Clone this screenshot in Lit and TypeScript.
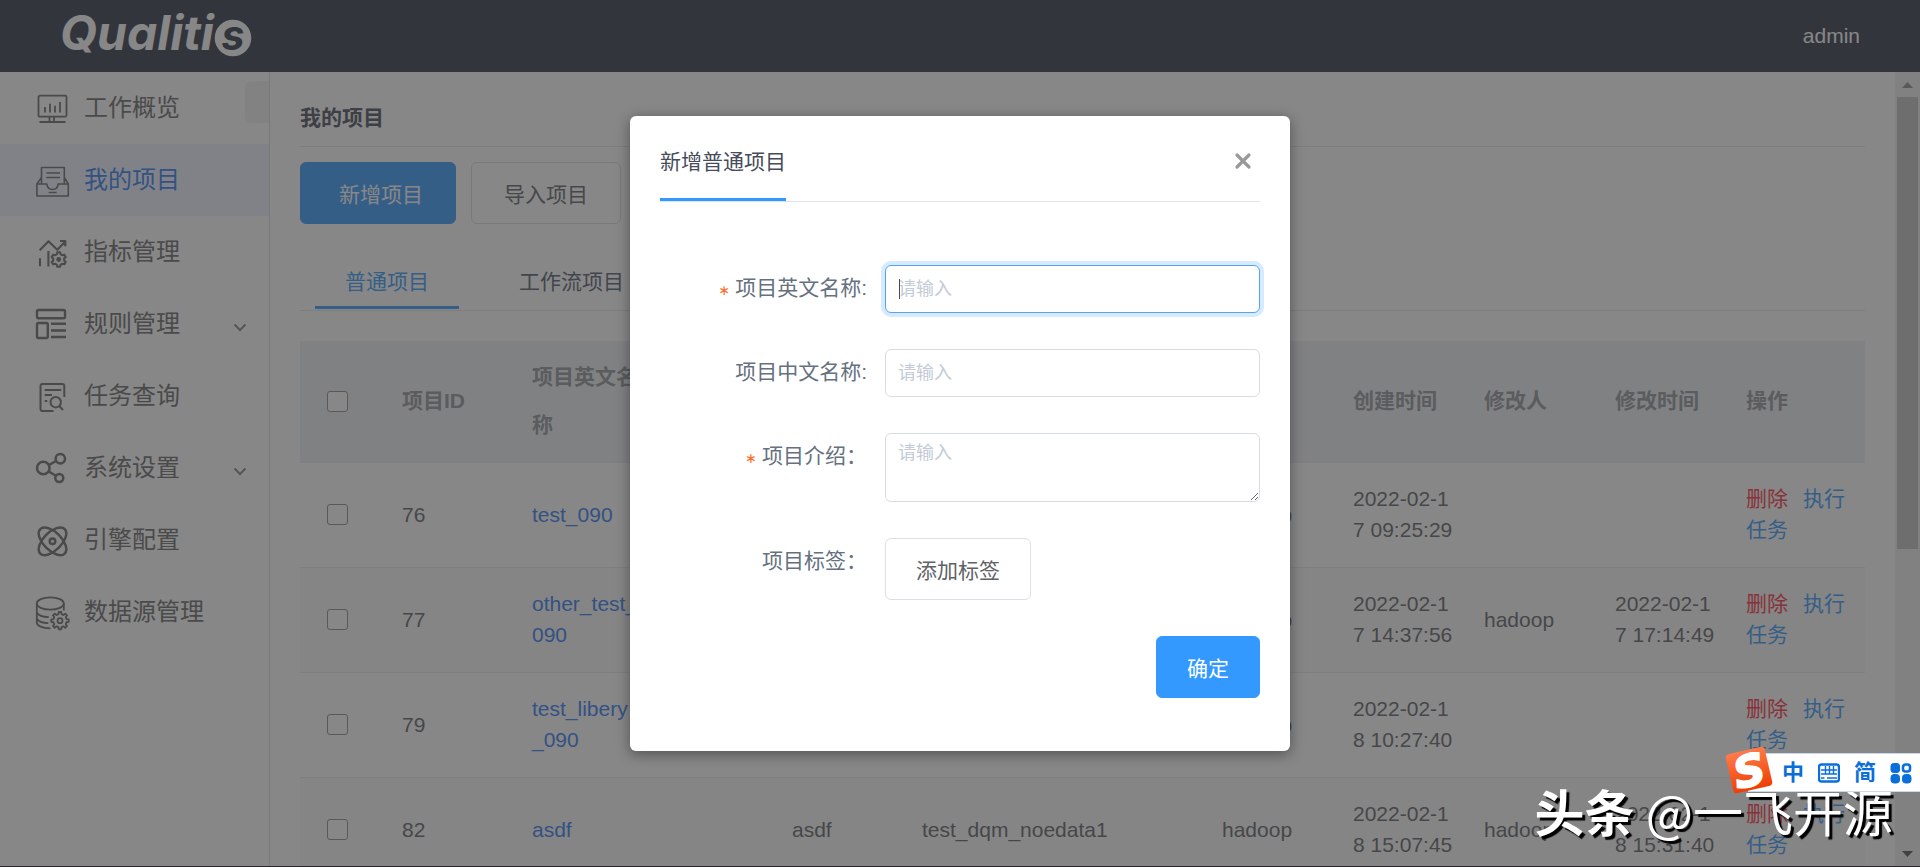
import { LitElement, html, css, svg, nothing } from "lit";
import { customElement, state } from "lit/decorators.js";
import { classMap } from "lit/directives/class-map.js";

const gear = (cx: number, cy: number, r: number, teeth: number) => {
  const points: string[] = [];
  const step = (Math.PI * 2) / teeth;
  for (let i = 0; i < teeth; i++) {
    const a = i * step - Math.PI / 2;
    [
      [-0.3, 0.76],
      [-0.18, 1],
      [0.18, 1],
      [0.3, 0.76],
    ].forEach(([offset, scale]) => {
      const t = a + offset * step;
      points.push(`${(cx + Math.cos(t) * r * scale).toFixed(2)},${(cy + Math.sin(t) * r * scale).toFixed(2)}`);
    });
  }
  return svg`<polygon points=${points.join(" ")}></polygon>`;
};

const icons: Record<string, unknown> = {
  overview: svg`<g stroke-width="1.8">
    <rect x="2.5" y="4.7" width="28" height="21" rx="1.5"></rect>
    <path d="M9 16v5.5M14 12.7v8.8M19 14.7v6.8M24 11v10.5M13.5 26v5M18 26v5M3.5 31h26"></path></g>`,
  projects: svg`<g stroke-width="1.6">
    <path d="M5.5 20.500V4.500h22.800v16M10.300 10H24M10.300 14.500H24M5.500 14.500L.9 21v12h31.400V21l-4-6.500"></path>
    <path d="M.9 21h10c.3 3.500 2.500 5.500 5.600 5.500s5.300-2 5.600-5.500h10.200M12.700 29.500h8"></path></g>`,
  metrics: svg`<g stroke-width="2.100">
    <path d="M3.700 15.300l8.800-9 8.800 8.500 7.800-8M24 6h5.300v5.200M4 23.300v8M12.400 16v15.400"></path>
    ${gear(22.7, 24.5, 7.4, 6)}<circle cx="22.700" cy="24.500" r="1.400" fill="currentColor"></circle></g>`,
  rules: svg`<g stroke-width="2.400">
    <rect x="1" y="3" width="28" height="8.300" rx="1.500"></rect>
    <rect x="1" y="16" width="10.800" height="15" rx="1.500"></rect>
    <path d="M15 16.700h15M15 23.500h15M15 30h15"></path></g>`,
  tasks: svg`<g stroke-width="2">
    <path d="M28.300 18V7a2 2 0 0 0-2-2H6.500a2 2 0 0 0-2 2v23a2 2 0 0 0 2 2H17.500M8.700 11h16.500M8.700 16H16M8.700 22h2.600"></path>
    <circle cx="19.700" cy="23.200" r="5.200"></circle><path d="M23.300 27l3.700 4"></path></g>`,
  settings: svg`<g stroke-width="2.500">
    <circle cx="7.300" cy="17" r="6.300"></circle><circle cx="24.300" cy="7.700" r="4.700"></circle>
    <circle cx="23.300" cy="27" r="4"></circle><path d="M13 14l7-4M12.700 20.500l7.200 4.300"></path></g>`,
  engine: svg`<g stroke-width="2.500">
    <ellipse cx="16.500" cy="18.300" rx="17.300" ry="9" transform="rotate(45 16.500 18.300)"></ellipse>
    <ellipse cx="16.500" cy="18.300" rx="17.300" ry="9" transform="rotate(-45 16.500 18.300)"></ellipse>
    <circle cx="16.500" cy="18.300" r="2.800"></circle></g>`,
  source: svg`<g stroke-width="1.800">
    <ellipse cx="14.300" cy="8.500" rx="13.500" ry="6.200"></ellipse>
    <path d="M.8 8.500v19c0 3.400 5.500 5.800 13.700 5.800M27.800 8.500v7M.8 17.500c1.500 3 6 4.500 12 4.700M.8 23.500c1.500 3 6 4.500 11.500 4.700"></path>
    ${gear(24, 25.7, 8.8, 8)}<circle cx="24" cy="25.700" r="2.500"></circle></g>`,
};

interface MenuItem {
  icon: string;
  label: string;
  active?: boolean;
  expandable?: boolean;
}

const MENU: MenuItem[] = [
  { icon: "overview", label: "工作概览" },
  { icon: "projects", label: "我的项目", active: true },
  { icon: "metrics", label: "指标管理" },
  { icon: "rules", label: "规则管理", expandable: true },
  { icon: "tasks", label: "任务查询" },
  { icon: "settings", label: "系统设置", expandable: true },
  { icon: "engine", label: "引擎配置" },
  { icon: "source", label: "数据源管理" },
];

const COLUMNS = [
  { key: "id", title: "项目ID" },
  { key: "name", title: "项目英文名称" },
  { key: "cn", title: "中文名称" },
  { key: "intro", title: "项目介绍" },
  { key: "tags", title: "项目标签" },
  { key: "creator", title: "创建人" },
  { key: "created", title: "创建时间" },
  { key: "editor", title: "修改人" },
  { key: "edited", title: "修改时间" },
];

const ROWS = [
  { id: "76", name: "test_090", creator: "hadoop", created: "2022-02-17 09:25:29" },
  {
    id: "77",
    name: "other_test_090",
    creator: "hadoop",
    created: "2022-02-17 14:37:56",
    editor: "hadoop",
    edited: "2022-02-17 17:14:49",
  },
  { id: "79", name: "test_libery_090", creator: "hadoop", created: "2022-02-18 10:27:40" },
  {
    id: "82",
    name: "asdf",
    intro: "asdf",
    tags: "test_dqm_noedata1",
    creator: "hadoop",
    created: "2022-02-18 15:07:45",
    editor: "hadoop",
    edited: "2022-02-18 15:31:40",
  },
] as Record<string, string>[];

const base = css`
  * {
    box-sizing: border-box;
  }
  a {
    text-decoration: none;
    color: inherit;
  }
  button,
  input,
  textarea {
    font: inherit;
    margin: 0;
  }
`;

@customElement("side-menu")
class SideMenu extends LitElement {
  static styles = [
    base,
    css`
      :host {
        display: block;
        position: relative;
        width: 270px;
        flex: none;
        overflow: hidden;
        background: #fff;
        border-right: 1px solid #d7dde4;
      }
      .item {
        display: flex;
        align-items: center;
        height: 72px;
        padding: 0 22px 0 36px;
        font-size: 24px;
        color: #666;
      }
      .active {
        background: #f0f3ff;
      }
      .active .label {
        color: #2d7af5;
      }
      .icon {
        width: 34px;
        height: 34px;
        margin-right: 14px;
        overflow: visible;
        fill: none;
        stroke: currentColor;
        stroke-linejoin: round;
      }
      .label {
        flex: 1;
        line-height: 36px;
      }
      .chevron {
        width: 14px;
        height: 14px;
        margin-top: 6px;
        fill: none;
        stroke: #808695;
        stroke-width: 2;
      }
      .fold {
        position: absolute;
        top: 9px;
        right: -18px;
        width: 42px;
        height: 42px;
        border: 0;
        border-radius: 6px;
        background: #f3f3f3;
      }
    `,
  ];

  render() {
    return html`<nav>
        ${MENU.map(
          (m) => html`<a href="#" class=${classMap({ item: true, active: !!m.active })}>
            <svg class="icon" viewBox="0 0 34 34">${icons[m.icon]}</svg>
            <span class="label">${m.label}</span>
            ${m.expandable
              ? html`<svg class="chevron" viewBox="0 0 14 14"><path d="M1.500 4.500L7 10l5.500-5.500"></path></svg>`
              : nothing}
          </a>`
        )}
      </nav>
      <button class="fold" aria-label="收起菜单"></button>`;
  }
}

@customElement("project-list")
class ProjectList extends LitElement {
  static styles = [
    base,
    css`
      :host {
        display: block;
        flex: 1;
        min-width: 0;
        overflow: hidden;
        padding: 31px 30px 30px;
        background: #fff;
        color: #5c5f66;
      }
      .title {
        margin: 0;
        padding-bottom: 13px;
        border-bottom: 1px solid #e3e5e9;
        font-size: 21px;
        line-height: 30px;
        color: #464c5b;
      }
      .toolbar {
        display: flex;
        gap: 15px;
        margin-top: 15px;
      }
      .btn {
        height: 62px;
        padding: 0 32px;
        border: 1px solid #d7dde4;
        border-radius: 6px;
        background: #fff;
        font-size: 21px;
        color: #5c5f66;
      }
      .primary {
        padding: 0 32px 0 38px;
        border-color: #3399ff;
        background: #3399ff;
        color: #fff;
      }
      .tabs {
        display: flex;
        gap: 30px;
        margin-top: 34px;
        padding: 0 15px 1px;
        border-bottom: 1px solid #e3e5e9;
      }
      .tab {
        padding: 0 30px;
        border: 0;
        border-bottom: 3px solid transparent;
        background: none;
        font-size: 21px;
        line-height: 48px;
        color: #515a6e;
      }
      .current {
        border-color: #3399ff;
        color: #3399ff;
      }
      .table {
        width: 100%;
        margin-top: 30px;
        border-collapse: separate;
        border-spacing: 0;
        table-layout: fixed;
        font-size: 21px;
      }
      th,
      td {
        padding: 20px 0 22px 24px;
        border-bottom: 1px solid #e9ecf4;
        text-align: left;
        line-height: 31px;
        word-break: break-all;
      }
      th {
        padding: 12px 0 13px 24px;
        background: #eef1f6;
        line-height: 48px;
        color: #909399;
      }
      td {
        height: 105px;
      }
      tbody tr:nth-child(even) td {
        background: #f9f9f9;
      }
      .pick {
        width: 78px;
        padding-left: 27px;
      }
      .c-id,
      .c-name,
      .c-cn,
      .c-intro {
        width: 130px;
      }
      .c-creator,
      .c-created,
      .c-editor,
      .c-edited {
        width: 131px;
      }
      .actions {
        width: 143px;
      }
      .box {
        display: block;
        width: 21px;
        height: 21px;
        appearance: none;
        border: 1px solid #8c8c8c;
        border-radius: 3px;
        background: #fff;
      }
      .link {
        color: #2d7af5;
      }
      .del {
        margin-right: 15px;
        color: #ff2a3c;
      }
      .run {
        color: #3399ff;
      }
    `,
  ];

  render() {
    return html`
      <h1 class="title">我的项目</h1>
      <div class="toolbar">
        <button class="btn primary">新增项目</button>
        <button class="btn">导入项目</button>
      </div>
      <div class="tabs" role="tablist">
        <button class="tab current" role="tab" aria-selected="true">普通项目</button>
        <button class="tab" role="tab" aria-selected="false">工作流项目</button>
      </div>
      <table class="table">
        <thead>
          <tr>
            <th class="pick"><input class="box" type="checkbox" aria-label="全选" /></th>
            ${COLUMNS.map((c) => html`<th class="c-${c.key}">${c.title}</th>`)}
            <th class="actions">操作</th>
          </tr>
        </thead>
        <tbody>
          ${ROWS.map(
            (r) => html`<tr>
              <td class="pick"><input class="box" type="checkbox" aria-label=${r.name} /></td>
              ${COLUMNS.map(
                (c) =>
                  html`<td>${c.key === "name" ? html`<a class="link" href="#">${r.name}</a>` : r[c.key] ?? nothing}</td>`
              )}
              <td><a class="del" href="#">删除</a><a class="run" href="#">执行任务</a></td>
            </tr>`
          )}
        </tbody>
      </table>
    `;
  }
}

@customElement("project-dialog")
class ProjectDialog extends LitElement {
  static styles = [
    base,
    css`
      :host {
        display: block;
        width: 660px;
        padding: 30px 30px 53px;
        border-radius: 6px;
        background: #fff;
        box-shadow: 0 3px 14px rgba(0, 0, 0, 0.4);
        font-size: 21px;
        color: #657180;
      }
      .head {
        display: flex;
        justify-content: space-between;
        align-items: flex-start;
        border-bottom: 1px solid #dfe3eb;
      }
      .title {
        margin: 0;
        padding-bottom: 21px;
        border-bottom: 3px solid #3399ff;
        font-size: 21px;
        font-weight: 400;
        line-height: 31px;
        color: #464c5b;
      }
      .close {
        width: 34px;
        height: 30px;
        padding: 0;
        border: 0;
        background: none;
      }
      .cross {
        display: block;
        width: 34px;
        height: 30px;
        stroke: #999;
        stroke-width: 3.2;
        stroke-linecap: round;
      }
      .form {
        display: flex;
        flex-direction: column;
        gap: 36px;
        padding-top: 63px;
      }
      .row {
        display: grid;
        grid-template-columns: 225px 1fr;
        align-items: start;
      }
      .label {
        padding: 7px 18px 0 0;
        text-align: right;
        line-height: 31px;
      }
      .required::before {
        content: "∗";
        margin-right: 5px;
        font-family: "DejaVu Sans", sans-serif;
        font-size: 14px;
        line-height: 1px;
        color: #ff6a26;
      }
      .field {
        position: relative;
        display: flex;
      }
      .input {
        width: 100%;
        height: 48px;
        padding: 0 12px;
        border: 1px solid #d7dde4;
        border-radius: 6px;
        background: #fff;
        font-size: 18px;
        color: #657180;
        outline: none;
      }
      .input::placeholder {
        color: #c3cbd6;
        opacity: 1;
      }
      .focused {
        border-color: #57a3f3;
        box-shadow: 0 0 0 4px rgba(51, 153, 255, 0.2);
      }
      .area {
        height: 69px;
        padding: 6px 12px;
        line-height: 27px;
        resize: vertical;
      }
      .caret {
        position: absolute;
        left: 14px;
        top: 14px;
        width: 1px;
        height: 20px;
        background: #464c5b;
      }
      .btn {
        height: 62px;
        padding: 0 30px;
        border: 1px solid #dcdfe6;
        border-radius: 6px;
        background: #fff;
        color: #606266;
      }
      .ok {
        align-self: flex-end;
        border-color: #3399ff;
        background: #3399ff;
        color: #fff;
      }
    `,
  ];

  render() {
    return html`
      <header class="head">
        <h2 class="title">新增普通项目</h2>
        <button class="close" aria-label="关闭">
          <svg class="cross" viewBox="0 0 34 30"><path d="M11 9l12 12M23 9l-12 12"></path></svg>
        </button>
      </header>
      <form class="form">
        <div class="row">
          <label class="label required" for="en">项目英文名称:</label>
          <div class="field">
            <input id="en" class="input focused" type="text" placeholder="请输入" />
            <span class="caret"></span>
          </div>
        </div>
        <div class="row">
          <label class="label" for="cn">项目中文名称:</label>
          <div class="field"><input id="cn" class="input" type="text" placeholder="请输入" /></div>
        </div>
        <div class="row">
          <label class="label required" for="intro">项目介绍：</label>
          <div class="field"><textarea id="intro" class="input area" placeholder="请输入"></textarea></div>
        </div>
        <div class="row">
          <label class="label" for="tag">项目标签：</label>
          <div class="field"><button id="tag" class="btn" type="button">添加标签</button></div>
        </div>
        <button class="btn ok" type="button">确定</button>
      </form>
    `;
  }
}

@customElement("input-method-bar")
class InputMethodBar extends LitElement {
  static styles = css`
    :host {
      display: flex;
      align-items: center;
      gap: 14px;
      height: 39px;
      padding: 0 8px 0 33px;
      background: #fff;
      border: 1px solid #c9d8ea;
      border-right: 0;
      font-size: 22px;
      font-weight: 700;
      line-height: 36px;
      color: #0a6fdb;
    }
    .badge {
      position: absolute;
      left: -24px;
      top: -7px;
      width: 48px;
      height: 48px;
      overflow: visible;
    }
    .glyph {
      width: 22px;
      height: 22px;
      fill: none;
      stroke: currentColor;
    }
    .s {
      font: italic 700 43px "DejaVu Sans", sans-serif;
      fill: #fff;
      stroke: #fff;
      stroke-width: 2;
    }
  `;

  render() {
    return html`
      <svg class="badge" viewBox="0 0 48 48">
        <defs>
          <linearGradient id="flame" x1="0" y1="0" x2="0" y2="1">
            <stop offset="0" stop-color="#ff7b4a"></stop>
            <stop offset="1" stop-color="#ee3f05"></stop>
          </linearGradient>
        </defs>
        <g transform="rotate(-13 24 23)">
          <rect x="4" y="3" width="40" height="40" rx="4" fill="url(#flame)"></rect>
          <text class="s" x="24" y="39" text-anchor="middle">S</text>
        </g>
      </svg>
      <span>中</span>
      <svg class="glyph" viewBox="0 0 22 22">
        <rect x="1" y="2.500" width="20" height="17" rx="2.500" stroke-width="2.400"></rect>
        <path d="M3 8h16M3 12h16M3 16h3.500M9 16h10M7.500 4v8M11.500 4v8M15.500 4v8" stroke-width="1.400"></path>
      </svg>
      <span>简</span>
      <svg class="glyph" viewBox="0 0 22 22">
        <rect x="1" y="1.500" width="8.500" height="9" rx="2.500" fill="currentColor"></rect>
        <rect x="1" y="12.500" width="8.500" height="8.500" rx="3" fill="currentColor"></rect>
        <rect x="12.500" y="12.500" width="8.500" height="8.500" rx="3" fill="currentColor"></rect>
        <rect x="13" y="2.500" width="7" height="7" rx="2.500" stroke-width="2.600"></rect>
      </svg>
    `;
  }
}

@customElement("app-root")
class AppRoot extends LitElement {
  @state() private dialogOpen = true;

  static styles = [
    base,
    css`
      :host {
        display: flex;
        flex-direction: column;
        position: relative;
        height: 100vh;
        overflow: hidden;
        border-bottom: 1px solid #2a262b;
        box-sizing: border-box;
        font-family: "Liberation Sans", "Noto Sans CJK SC", sans-serif;
      }
      .header {
        display: flex;
        flex: none;
        align-items: center;
        justify-content: space-between;
        height: 72px;
        padding: 0 60px;
        background: #2d3448;
        color: #fff;
        font-size: 21px;
      }
      .logo {
        width: 200px;
        height: 72px;
      }
      .word {
        font: italic 700 48px "Inter", sans-serif;
        fill: #fff;
      }
      .last {
        font: italic 700 41px "Inter", sans-serif;
        fill: #2d3448;
      }
      .main {
        display: flex;
        flex: 1;
        min-height: 0;
      }
      .scroll {
        display: flex;
        flex: none;
        flex-direction: column;
        width: 25px;
        padding: 0 2px;
        background: #f1f1f1;
      }
      .arrow {
        width: 21px;
        height: 25px;
        fill: #505050;
      }
      .up {
        fill: #8c8c8c;
      }
      .thumb {
        flex: 452;
        background: #c1c1c1;
      }
      .rest {
        flex: 292;
      }
      .mask {
        position: absolute;
        inset: 0;
        display: flex;
        justify-content: center;
        align-items: flex-start;
        padding-top: 116px;
        background: rgba(55, 55, 55, 0.6);
      }
      .mark {
        position: absolute;
        right: 27px;
        bottom: 20px;
        font-size: 50px;
        line-height: 72px;
        color: #fff;
        text-shadow: 3px 3px 1px #000;
        white-space: nowrap;
        font-family: "Noto Sans CJK SC", sans-serif;
      }
      .ime {
        position: absolute;
        right: 0;
        bottom: 74px;
      }
    `,
  ];

  render() {
    return html`
      <header class="header">
        <svg class="logo" viewBox="0 0 200 72" role="img" aria-label="Qualitis">
          <text class="word" x="0" y="50">Qualiti</text>
          <circle cx="173" cy="38" r="18.300" fill="#fff"></circle>
          <text class="last" x="173" y="50" text-anchor="middle">s</text>
        </svg>
        <span>admin</span>
      </header>
      <div class="main">
        <side-menu></side-menu>
        <project-list></project-list>
        <div class="scroll">
          <svg class="arrow up" viewBox="0 0 21 25"><path d="M5 16l5.500-6 5.500 6z"></path></svg>
          <div class="thumb"></div>
          <div class="rest"></div>
          <svg class="arrow" viewBox="0 0 21 25"><path d="M5 10l5.500 6 5.500-6z"></path></svg>
        </div>
      </div>
      ${this.dialogOpen
        ? html`<div class="mask"><project-dialog role="dialog"></project-dialog></div>`
        : nothing}
      <div class="mark"><b>头条</b> @一飞开源</div>
      <input-method-bar class="ime"></input-method-bar>
    `;
  }
}
